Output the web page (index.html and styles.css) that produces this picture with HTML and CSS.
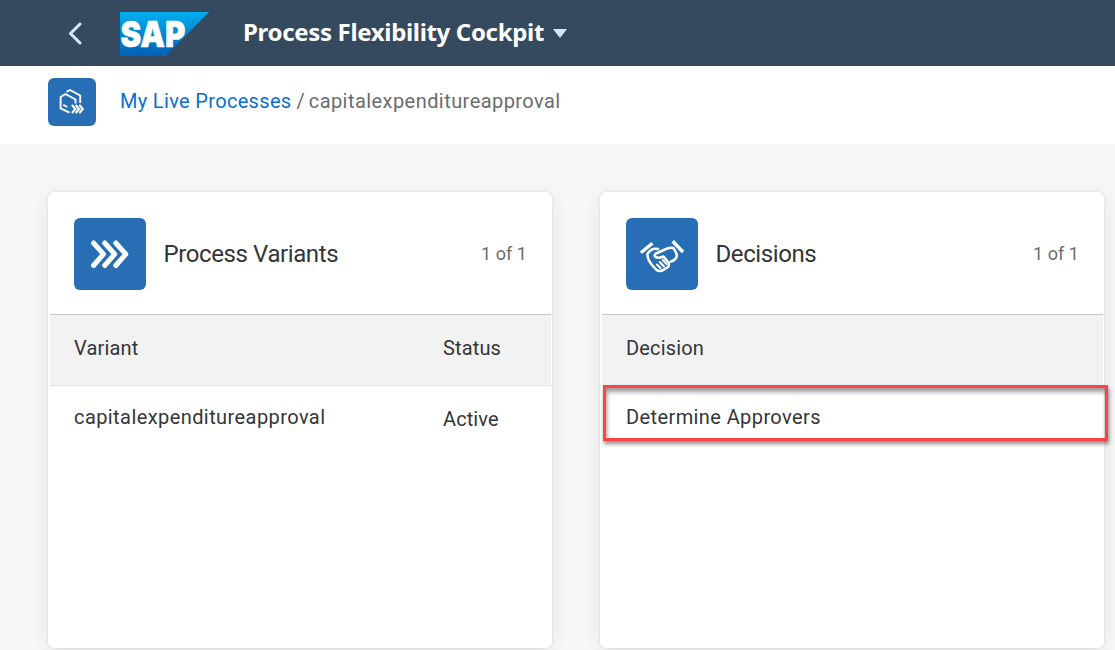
FILE: index.html
```html
<!DOCTYPE html>
<html lang="en">
<head>
<meta charset="utf-8">
<title>Process Flexibility Cockpit</title>
<link rel="stylesheet" href="styles.css">
</head>
<body>
<header class="shell">
  <svg class="back" width="16" height="24" viewBox="0 0 16 24"><path d="M14 3 L4.500 12.500 L14 22" fill="none" stroke="#d1e8ff" stroke-width="3" stroke-linecap="round" stroke-linejoin="round"/></svg>
  <svg class="logo" width="90" height="44" viewBox="0 0 90 44">
    <defs><linearGradient id="sap" x1="0" y1="0" x2="0" y2="1"><stop offset="0" stop-color="#00aeef"/><stop offset=".3" stop-color="#0097dc"/><stop offset="1" stop-color="#0060b4"/></linearGradient></defs>
    <path d="M0 0H89L45.500 44H0Z" fill="url(#sap)"/>
    <text class="logo-text" x=".5" y="35" textLength="65" lengthAdjust="spacingAndGlyphs">SAP</text>
  </svg>
  <h1 class="title">Process Flexibility Cockpit</h1>
  <svg class="caret" width="14" height="9" viewBox="0 0 14 9"><path d="M0 0h14L7 9Z" fill="#d1e8ff"/></svg>
</header>
<nav class="crumbs">
  <span class="tile tile-small"><svg width="48" height="48" viewBox="0 0 48 48" fill="none" stroke="#fff" stroke-width="1.900"><path d="M21.500 34.700L12.600 30.300V19L17.500 16L27.500 21.500V25.500M18.500 13.800L22 12L32.200 17.500V25M15.300 26.800L19.300 29"/><path stroke-width="2.100" stroke-linecap="round" d="M24.500 27.500L27.300 31L24.500 34.500M28.200 27.500L31 31L28.200 34.500M31.900 27.500L34.700 31L31.900 34.500"/></svg></span>
  <div class="path"><a class="link">My Live Processes</a><span class="slash">/</span><span class="current">capitalexpenditureapproval</span></div>
</nav>
<main class="board">
  <section class="card">
    <div class="card-head">
      <span class="tile"><svg width="72" height="72" viewBox="0 0 72 72" fill="none" stroke="#fff" stroke-width="5" stroke-linecap="round" stroke-linejoin="round"><path d="M19.500 25L29.500 36.200L19.500 47.500M30.700 25L40.700 36.200L30.700 47.500M41.800 25L51.800 36.200L41.800 47.500"/></svg></span>
      <h2 class="card-title">Process Variants</h2>
      <span class="count">1 of 1</span>
    </div>
    <div class="row row-head"><span class="name">Variant</span><span class="status">Status</span></div>
    <div class="row"><span class="name long">capitalexpenditureapproval</span><span class="status active">Active</span></div>
  </section>
  <section class="card">
    <div class="card-head">
      <span class="tile"><svg width="72" height="72" viewBox="0 0 72 72" fill="none" stroke="#fff" stroke-width="2.500" stroke-linejoin="round" stroke-linecap="round"><path stroke-width="3.400" stroke-linecap="butt" d="M14.800 34.800L26.500 25.200M46.700 23.300L57 34"/><path d="M32 31Q26 29.500 21.500 35.500Q21 41 26 47L30 51.500Q33 54 36.500 52.500L42 49Q43.500 47 42.500 44.500L37.500 38.500Q33 40.500 29.500 39Q27.500 37.500 30 35.500L39 31.500Q43 29 47.500 30L50.500 35.500Q52 41 45 43.500"/><path stroke-width="2" d="M31 46.500L34.500 50M33.800 44L38 48.500M36.800 42L40.500 46"/></svg></span>
      <h2 class="card-title">Decisions</h2>
      <span class="count">1 of 1</span>
    </div>
    <div class="row row-head"><span class="name">Decision</span></div>
    <div class="row"><span class="name">Determine Approvers</span><div class="highlight"></div></div>
  </section>
</main>
</body>
</html>
```
FILE: styles.css
```css
* { box-sizing: border-box; }
body { margin: 0; width: 1115px; height: 650px; overflow: hidden; background: #f7f7f7; font-family: Roboto, "Noto Sans", sans-serif; color: #32363a; }
svg { display: block; flex: none; }
h1, h2 { margin: 0; }
.shell { height: 66px; background: #354a5f; display: flex; align-items: center; padding-left: 66px; }
.back { margin-left: -.5px; }
.logo { margin: 2px 0 0 38.5px; }
.logo-text { font: 900 36px Inter, sans-serif; fill: #fff; stroke: #fff; stroke-width: .5px; }
.title { margin: -2px 0 0 33px; color: #fff; font: 700 24px/32px "Noto Sans", sans-serif; white-space: nowrap; letter-spacing: -.33px; }
.caret { margin-left: 9px; }
.crumbs { height: 78px; background: #fff; display: flex; padding: 12px 48px; gap: 24px; }
.tile { width: 72px; height: 72px; border-radius: 6px; background: #286eb4; flex: none; }
.tile-small { width: 48px; height: 48px; }
.path { display: flex; font-size: 20px; line-height: 46px; color: #6a6d70; white-space: nowrap; letter-spacing: .44px; }
.link { color: #0a6ed1; letter-spacing: .33px; }
.slash { margin: 0 3.5px 0 5px; }
.board { display: flex; gap: 48px; padding: 48px 0 0 48px; }
.card { flex: none; width: 504px; height: 456px; background: #fff; border-radius: 6px; box-shadow: 0 0 2px rgba(0,0,0,.16), 0 3px 18px rgba(0,0,0,.08); padding: 0 1px 0 2px; }
.card-head { display: flex; height: 122px; padding: 26px 24px 0 24px; }
.card-title { flex: 1; margin-left: 17.5px; font-weight: 400; font-size: 24px; line-height: 72px; letter-spacing: -.4px; }
.count { font-size: 18px; line-height: 72px; color: #6a6d70; letter-spacing: .05px; }
.row { position: relative; display: flex; height: 64px; padding: 0 24px; font-size: 20px; line-height: 63px; letter-spacing: .4px; }
.row-head { height: 72px; line-height: 66px; background: #f2f2f2; border-top: 1px solid #c8c8c8; border-bottom: 1px solid #e2e2e2; letter-spacing: .15px; }
.name { width: 369px; }
.long { letter-spacing: .42px; }
.active { padding-top: 2px; letter-spacing: .1px; }
.highlight { position: absolute; left: 1px; top: -1px; width: 505px; height: 56px; border: 3px solid #ff4343; box-shadow: 1px 3px 4px rgba(0,0,0,.45), inset 1px 4px 4px rgba(0,0,0,.4); }
```
